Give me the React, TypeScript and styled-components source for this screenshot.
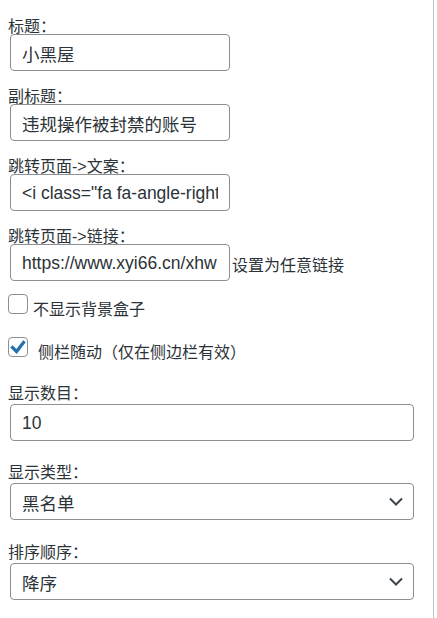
import React from "react";
import styled, { createGlobalStyle } from "styled-components";

const GlobalStyle = createGlobalStyle`
  html, body {
    margin: 0;
    padding: 0;
    background: #fff;
  }
  body {
    font-family: "Liberation Sans", "Noto Sans CJK SC", sans-serif;
    color: #2c3338;
  }
`;

const font = `"Liberation Sans", "Noto Sans CJK SC", sans-serif`;

const Page = styled.div`
  display: flex;
  min-height: 100vh;
`;

const Panel = styled.form`
  box-sizing: border-box;
  width: 434px;
  padding: 18px 19px 0 8px;
  border-right: 1px solid #c3c4c7;
`;

const Field = styled.div<{ $after?: number }>`
  display: flex;
  flex-direction: column;
  align-items: flex-start;
  margin-bottom: ${(p) => p.$after ?? 17}px;
`;

const Label = styled.label<{ $gap?: number }>`
  display: block;
  font-family: ${font};
  font-size: 16px;
  line-height: 17px;
  color: #2c3338;
  margin-bottom: ${(p) => p.$gap ?? -1}px;
`;

const InputRow = styled.div`
  display: flex;
  align-items: center;
  width: 100%;
`;

const TextBox = styled.div<{ $wide?: boolean }>`
  box-sizing: border-box;
  display: flex;
  align-items: center;
  width: ${(p) => (p.$wide ? "404px" : "220px")};
  height: 37px;
  margin-left: 2px;
  padding: 2px 11px 0;
  border: 1px solid #8c8f94;
  border-radius: 4px;
  background: #fff;
  font-family: ${font};
  font-size: 17.5px;
  color: #2c3338;
`;

const Value = styled.span`
  flex: 1;
  min-width: 0;
  overflow: hidden;
  white-space: nowrap;
`;

const Hint = styled.span`
  margin-left: 2px;
  padding-top: 3px;
  font-family: ${font};
  font-size: 16px;
  color: #2c3338;
  white-space: nowrap;
`;

const CheckRow = styled.div<{ $after: number }>`
  display: flex;
  align-items: flex-end;
  height: 20px;
  margin-bottom: ${(p) => p.$after}px;
`;

const Box = styled.span`
  box-sizing: border-box;
  display: flex;
  align-items: center;
  justify-content: center;
  width: 20px;
  height: 20px;
  border: 1px solid #8c8f94;
  border-radius: 4px;
  background: #fff;
  flex-shrink: 0;
`;

const CheckText = styled.span<{ $gap: number }>`
  margin-left: ${(p) => p.$gap}px;
  margin-bottom: -4px;
  font-family: ${font};
  font-size: 16px;
  line-height: 17px;
  color: #2c3338;
  white-space: nowrap;
`;

const SelectBox = styled.div`
  box-sizing: border-box;
  display: flex;
  align-items: center;
  justify-content: space-between;
  width: 404px;
  height: 37px;
  margin-left: 2px;
  padding: 2px 10px 0 11px;
  border: 1px solid #8c8f94;
  border-radius: 4px;
  background: #fff;
  font-family: ${font};
  font-size: 17.5px;
  color: #2c3338;

  svg {
    margin-top: -2px;
  }
`;

const Chevron = () => (
  <svg width="14" height="9" viewBox="0 0 14 9" aria-hidden="true">
    <polyline points="1,1.5 7,7.5 13,1.5" fill="none" stroke="#3c434a" strokeWidth="2" />
  </svg>
);

const Check = () => (
  <svg width="18" height="18" viewBox="0 0 18 18" aria-hidden="true">
    <polyline
      points="3.5,9.5 7.5,13.5 14.5,4.5"
      fill="none"
      stroke="#2271b1"
      strokeWidth="3.2"
      strokeLinecap="square"
    />
  </svg>
);

type CheckProps = { label: string; checked?: boolean; gap: number; after: number };

const CheckField: React.FC<CheckProps> = ({ label, checked, gap, after }) => (
  <CheckRow $after={after}>
    <Box>{checked && <Check />}</Box>
    <CheckText $gap={gap}>{label}</CheckText>
  </CheckRow>
);

const Text: React.FC<{ value: string; wide?: boolean }> = ({ value, wide }) => (
  <TextBox $wide={wide}>
    <Value>{value}</Value>
  </TextBox>
);

export default function App() {
  return (
    <Page>
      <GlobalStyle />
      <Panel onSubmit={(e) => e.preventDefault()}>
        <Field>
          <Label>标题：</Label>
          <Text value="小黑屋" />
        </Field>
        <Field>
          <Label>副标题：</Label>
          <Text value="违规操作被封禁的账号" />
        </Field>
        <Field>
          <Label>跳转页面-&gt;文案：</Label>
          <Text value={'<i class="fa fa-angle-right"></i>'} />
        </Field>
        <Field $after={13}>
          <Label>跳转页面-&gt;链接：</Label>
          <InputRow>
            <Text value="https://www.xyi66.cn/xhw" />
            <Hint>设置为任意链接</Hint>
          </InputRow>
        </Field>
        <CheckField label="不显示背景盒子" gap={5} after={23} />
        <CheckField label="侧栏随动（仅在侧边栏有效）" checked gap={10} after={28} />
        <Field $after={23}>
          <Label $gap={2}>显示数目：</Label>
          <Text wide value="10" />
        </Field>
        <Field $after={24}>
          <Label $gap={2}>显示类型：</Label>
          <SelectBox>
            <span>黑名单</span>
            <Chevron />
          </SelectBox>
        </Field>
        <Field $after={0}>
          <Label $gap={2}>排序顺序：</Label>
          <SelectBox>
            <span>降序</span>
            <Chevron />
          </SelectBox>
        </Field>
      </Panel>
    </Page>
  );
}
